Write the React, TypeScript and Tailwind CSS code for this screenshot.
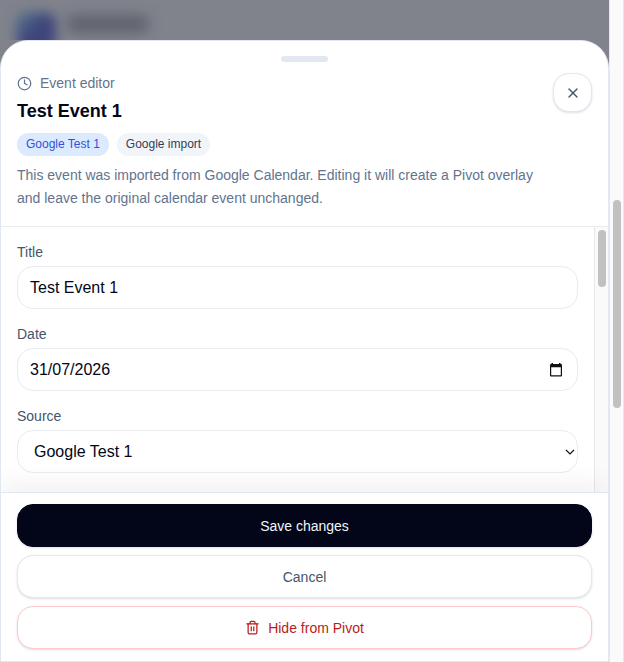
import { ReactNode, useState } from 'react'
import { Clock, Trash2, X } from 'lucide-react'
import clsx from 'clsx'

interface FieldProps {
  id: string
  label: string
  children: ReactNode
}

const inputClass =
  'h-[43px] w-full rounded-2xl border border-[#e8ebf0] bg-white px-3 text-base text-slate-950 outline-none focus:border-slate-400'

function Field({ id, label, children }: FieldProps) {
  return (
    <div className="space-y-1">
      <label htmlFor={id} className="block text-sm text-slate-600">
        {label}
      </label>
      {children}
    </div>
  )
}

function CalendarGlyph() {
  return (
    <svg viewBox="0 0 14 14" className="h-[14px] w-[14px]" aria-hidden="true">
      <path
        fill="#111"
        fillRule="evenodd"
        d="M2.5 0H4v1h6V0h1.500v1H12a1 1 0 0 1 1 1v10.500a1 1 0 0 1-1 1H2a1 1 0 0 1-1-1V2a1 1 0 0 1 1-1h.5V0ZM2.200 4.300v8h9.600v-8H2.200Z"
      />
    </svg>
  )
}

function ActionButton({ className, children }: { className: string; children: ReactNode }) {
  return (
    <button
      type="button"
      className={clsx(
        'flex h-[43px] w-full items-center justify-center gap-2 rounded-2xl border text-sm shadow-sm',
        className,
      )}
    >
      {children}
    </button>
  )
}

export default function App() {
  const [title, setTitle] = useState('Test Event 1')
  const [date, setDate] = useState('31/07/2026')
  const [source, setSource] = useState('google-test-1')

  return (
    <div className="flex h-screen min-h-[560px] bg-[#80838c] font-['Liberation_Sans',Arial,sans-serif]">
      <div className="flex min-w-0 flex-1 flex-col">
        {/* Dimmed page header behind the sheet */}
        <div className="flex h-10 shrink-0 gap-3 overflow-hidden px-4 pt-3" aria-hidden="true">
          <div className="h-10 w-10 rounded-xl bg-linear-to-br from-[#5a7890] via-[#3d4479] to-[#454384] blur-[6px]" />
          <div className="mt-1 h-4 w-20 rounded bg-[#5c5f68] blur-[7px]" />
        </div>

        <section
          role="dialog"
          aria-labelledby="editor-title"
          className="flex min-h-0 flex-1 flex-col overflow-hidden rounded-t-[28px] border border-slate-200 bg-white"
        >
          <header className="border-b border-[#e8ebf0] px-4 pt-[15px] pb-4">
            <div className="mx-auto h-1.5 w-[47px] rounded-full bg-slate-200" />
            <div className="mt-[11px] flex items-start justify-between gap-4">
              <div className="min-w-0">
                <div className="flex items-center gap-2 text-sm text-slate-500">
                  <Clock className="h-[15px] w-[15px]" strokeWidth={2} />
                  <span>Event editor</span>
                </div>
                <h2 id="editor-title" className="mt-1 text-lg leading-7 font-bold text-slate-950">
                  {title}
                </h2>
                <div className="mt-2 flex flex-wrap gap-2 text-xs leading-[15px]">
                  <span className="rounded-full bg-blue-100 px-[9px] py-1 text-[#3350dd]">Google Test 1</span>
                  <span className="rounded-full bg-slate-100 px-[9px] py-1 text-slate-700">Google import</span>
                </div>
                <p className="mt-2 max-w-[520px] text-sm leading-[23px] text-slate-500">
                  This event was imported from Google Calendar. Editing it will create a Pivot overlay and leave the
                  original calendar event unchanged.
                </p>
              </div>
              <button
                type="button"
                aria-label="Close"
                className="flex h-[39px] w-[39px] shrink-0 items-center justify-center rounded-2xl border border-slate-200 bg-white text-slate-600 shadow-sm"
              >
                <X className="h-4 w-4" />
              </button>
            </div>
          </header>

          <div className="flex min-h-0 flex-1">
            <form className="min-w-0 flex-1 space-y-[15px] overflow-hidden px-4 pt-[15px]">
              <Field id="title" label="Title">
                <input id="title" className={inputClass} value={title} onChange={(e) => setTitle(e.target.value)} />
              </Field>
              <Field id="date" label="Date">
                <div className="relative">
                  <input id="date" className={inputClass} value={date} onChange={(e) => setDate(e.target.value)} />
                  <button
                    type="button"
                    aria-label="Open calendar"
                    className="absolute inset-y-0 right-[15px] flex items-center"
                  >
                    <CalendarGlyph />
                  </button>
                </div>
              </Field>
              <Field id="source" label="Source">
                <div className="relative">
                  <select
                    id="source"
                    className={clsx(inputClass, 'appearance-none pl-4')}
                    value={source}
                    onChange={(e) => setSource(e.target.value)}
                  >
                    <option value="google-test-1">Google Test 1</option>
                  </select>
                  <svg
                    viewBox="0 0 10 6"
                    className="pointer-events-none absolute inset-y-0 right-[3px] my-auto h-1.5 w-2.5"
                    aria-hidden="true"
                  >
                    <path d="M1 1l4 4 4-4" fill="none" stroke="#111" strokeWidth="1.2" />
                  </svg>
                </div>
              </Field>
            </form>
            {/* Form scrollbar */}
            <div className="w-[14px] shrink-0 border-l border-[#e8e8e8] bg-[#fafafa] pt-[3px] pl-[3px]">
              <div className="h-[57px] w-2 rounded-full bg-[#c1c1c1]" />
            </div>
          </div>

          <footer className="relative space-y-2 border-t border-slate-200 bg-white px-4 pt-[11px] pb-3 shadow-[0_-8px_24px_rgba(15,23,42,0.06)]">
            <ActionButton className="border-slate-950 bg-slate-950 text-slate-100">Save changes</ActionButton>
            <ActionButton className="border-slate-200 bg-white text-slate-600">Cancel</ActionButton>
            <ActionButton className="border-red-200 bg-white text-[#b91c1c]">
              <Trash2 className="h-[15px] w-[15px]" />
              Hide from Pivot
            </ActionButton>
          </footer>
        </section>
      </div>

      {/* Page scrollbar */}
      <div className="w-[15px] shrink-0 border-x border-[#e8e8e8] bg-[#fafafa] pt-[200px] pl-[3px]">
        <div className="h-[208px] w-2 rounded-full bg-[#c1c1c1]" />
      </div>
    </div>
  )
}
